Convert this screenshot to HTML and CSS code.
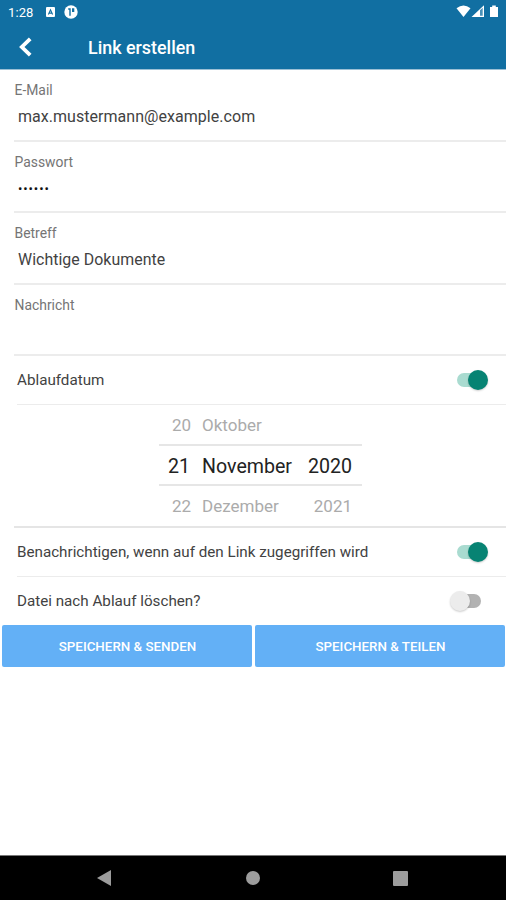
FILE: index.html
```html
<!DOCTYPE html>
<html lang="de">
<head>
<meta charset="utf-8">
<meta name="viewport" content="width=device-width, initial-scale=1">
<title>Link erstellen</title>
<link rel="stylesheet" href="styles.css">
</head>
<body>
<div class="screen">
  <header class="header">
    <div class="status">
      <span class="clock">1:28</span>
      <svg class="status-app" width="9" height="10" viewBox="0 0 9 10"><rect width="9" height="10" rx="1" fill="#fff"/><path d="M2.4 7.5 4.5 2.8l2.1 4.7M3.2 6.1h2.6" fill="none" stroke="#116fa2" stroke-width="1.1"/></svg>
      <svg class="status-badge" width="14" height="14" viewBox="0 0 14 14"><circle cx="7" cy="7" r="6.7" fill="#fff"/><path d="M4.200 3.200h2.500v7.600H5.300V4.800H4.200zM8 3.200h2.300v3.700H8z" fill="#116fa2"/></svg>
      <svg class="status-system" width="44" height="14" viewBox="0 0 44 14"><path d="M.5 3.200Q7.500-2 14.500 3.200L7.500 12z" fill="#fff"/><path d="M15.500 12 28 .3V12z" fill="#fff"/><path d="M24 5.200 26.700 2.800V10.800H24z" fill="#4a91b8"/><path d="M34 2h2.200V.4h3.600V2H42v10H34z" fill="#fff"/></svg>
    </div>
    <div class="toolbar">
      <svg class="back" width="14" height="20" viewBox="0 0 14 20"><path d="M11.200 1.800 2.800 10l8.400 8.200" fill="none" stroke="#fff" stroke-width="3.800"/></svg>
      <h1 class="title">Link erstellen</h1>
    </div>
  </header>
  <main class="form">
    <div class="field"><div class="label">E-Mail</div><div class="value">max.mustermann@example.com</div></div>
    <div class="field"><div class="label">Passwort</div><div class="value password">••••••</div></div>
    <div class="field"><div class="label">Betreff</div><div class="value subject">Wichtige Dokumente</div></div>
    <div class="field"><div class="label">Nachricht</div></div>
    <div class="option"><span>Ablaufdatum</span><span class="switch on"></span></div>
    <div class="dates">
      <div class="picker">
        <div class="row"><span class="day">20</span><span class="month">Oktober</span></div>
        <div class="row selected"><span class="day">21</span><span class="month">November</span><span class="year">2020</span></div>
        <div class="row"><span class="day">22</span><span class="month">Dezember</span><span class="year">2021</span></div>
      </div>
    </div>
    <div class="option"><span>Benachrichtigen, wenn auf den Link zugegriffen wird</span><span class="switch on"></span></div>
    <div class="option last"><span>Datei nach Ablauf löschen?</span><span class="switch off"></span></div>
    <div class="actions"><button class="button">SPEICHERN &amp; SENDEN</button><button class="button">SPEICHERN &amp; TEILEN</button></div>
  </main>
  <nav class="navigation">
    <svg width="14" height="16" viewBox="0 0 14 16"><path d="M0 8 14 0v16z" fill="#9c9c9c"/></svg>
    <svg class="home" width="14" height="14" viewBox="0 0 14 14"><circle cx="7" cy="7" r="7" fill="#9c9c9c"/></svg>
    <svg width="15" height="15" viewBox="0 0 15 15"><rect width="15" height="15" rx="1" fill="#9c9c9c"/></svg>
  </nav>
</div>
</body>
</html>
```

FILE: styles.css
```css
* { box-sizing: border-box; }
body { margin: 0; font-family: Roboto, sans-serif; color: #424242; background: #fff; }
.screen { display: flex; flex-direction: column; width: 506px; height: 900px; }
.header { height: 70px; background: #116fa2; color: #fff; border-bottom: 1px solid #9cc0d5; }
.status { display: flex; align-items: center; height: 24px; padding: 0 6px 0 8px; }
.clock { width: 38px; font-size: 13px; letter-spacing: .1px; }
.status-badge { margin-left: 9px; }
.status-system { margin-left: auto; }
.toolbar { display: flex; align-items: center; height: 46px; padding-left: 19px; }
.title { margin: 1px 0 0 55px; font-size: 17.900px; font-weight: 500; line-height: 22px; }
.form { flex: 1; }
.field { height: 71.500px; margin-left: 14px; padding-top: 10px; border-bottom: 2px solid #ececec; }
.label { height: 19px; padding-left: .5px; font-size: 13.900px; line-height: 20px; color: #757575; }
.value { height: 36px; padding-left: 4px; font-size: 16px; line-height: 35px; letter-spacing: .04px; }
.subject { font-size: 15.900px; }
.password { color: #111; font-size: 13px; letter-spacing: .9px; line-height: 36px; }
.option { display: flex; align-items: center; justify-content: space-between; height: 49px; margin-left: 17px; padding-right: 18px; border-bottom: 1px solid #ececec; font-size: 15.200px; line-height: 20px; }
.option.last { height: 48px; border: 0; }
.switch { position: relative; width: 31px; height: 20px; }
.switch::before { content: ""; position: absolute; top: 3px; left: 0; width: 25px; height: 14px; border-radius: 7px; background: #a9dbd0; }
.switch::after { content: ""; position: absolute; top: 0; left: 11px; width: 20px; height: 20px; border-radius: 50%; background: #078373; box-shadow: 0 1px 2px #0003; }
.switch.off { margin-right: 7px; }
.switch.off::before { left: 6px; background: #b2b2b2; }
.switch.off::after { left: 0; background: #ececec; }
.dates { height: 123px; margin-left: 14px; border-bottom: 2px solid #e5e5e5; }
.picker { width: 203px; margin-left: 145px; }
.row { display: grid; grid-template-columns: 32px 98px 63px; align-items: center; height: 40px; font-size: 17px; color: #ababab; }
.row:first-child { height: 39px; padding-top: 1px; }
.day { text-align: right; }
.month { padding-left: 11px; }
.year { text-align: right; }
.row.selected { height: 42px; border-top: 2px solid #e6e6e6; border-bottom: 2px solid #e6e6e6; padding-top: 3px; font-size: 19.600px; color: #222; }
.row.selected .day { padding-right: 1px; }
.actions { display: grid; grid-template-columns: 250px 250px; gap: 3px; padding-left: 2px; }
.button { height: 42px; padding: 2px 0 0 1px; border: 0; border-radius: 2px; background: #63b0f6; color: #fff; font: 500 13.350px/20px Roboto, sans-serif; }
.navigation { display: flex; align-items: center; justify-content: space-between; height: 45px; padding: 0 98px 0 97px; border-top: 1px solid #777; background: #000; }
.home { margin-left: 2px; }
```
